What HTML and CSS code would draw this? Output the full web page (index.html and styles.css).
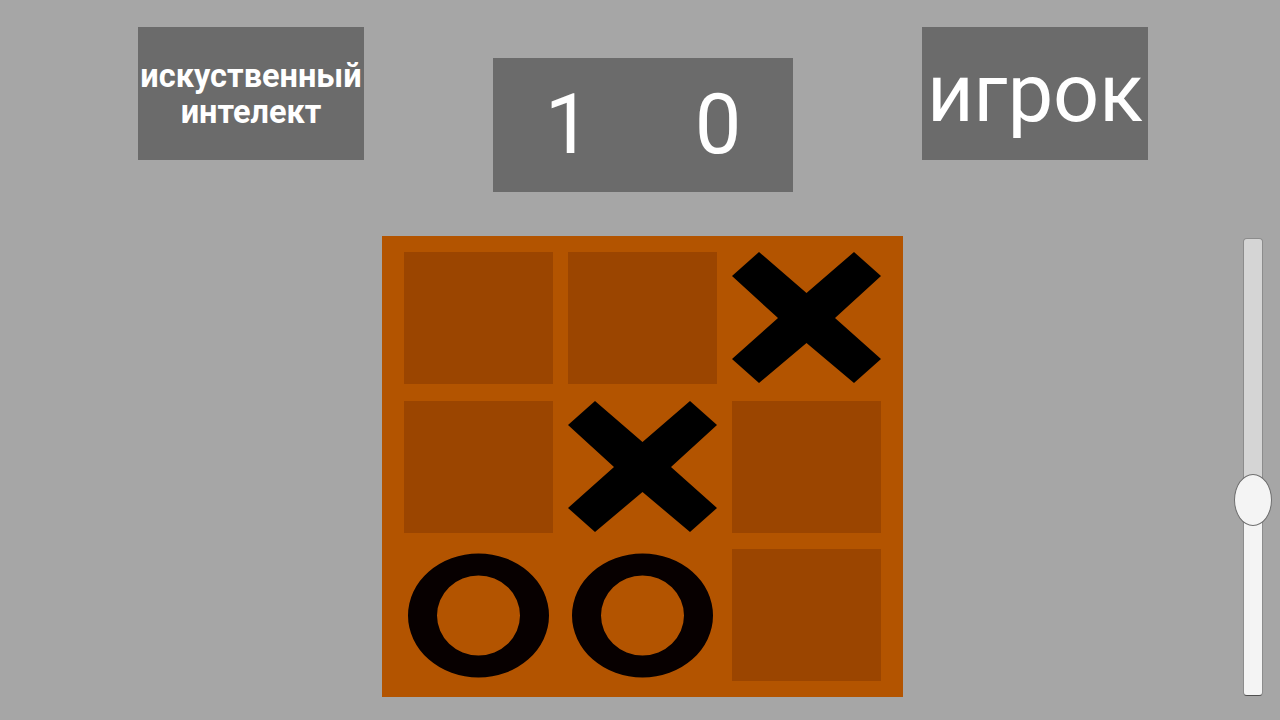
FILE: index.html
```html
<!DOCTYPE html>
<html lang="ru">
<head>
<meta charset="utf-8">
<title>Крестики-нолики</title>
<link rel="stylesheet" href="styles.css">
</head>
<body>
<div class="screen">
  <div class="top">
    <div class="btn btn-ai">искуственный<br>интелект</div>
    <div class="score">
      <div class="score-num">1</div>
      <div class="score-num">0</div>
    </div>
    <div class="btn btn-player">игрок</div>
  </div>
  <div class="main">
    <div class="board">
      <div class="cell empty"></div>
      <div class="cell empty"></div>
      <div class="cell">
        <svg class="mark" viewBox="0 0 149 132"><polygon points="27,0 0,24 46,66 0,107 27,131 74.5,91 122,131 149,107 103,66 149,24 122,0 74.5,41" fill="#000"/></svg>
      </div>
      <div class="cell empty"></div>
      <div class="cell">
        <svg class="mark" viewBox="0 0 149 132"><polygon points="27,0 0,24 46,66 0,107 27,131 74.5,91 122,131 149,107 103,66 149,24 122,0 74.5,41" fill="#000"/></svg>
      </div>
      <div class="cell empty"></div>
      <div class="cell">
        <svg class="mark" viewBox="0 0 149 132"><path fill-rule="evenodd" fill="#070000" d="M4 66.5a70.5 62 0 1 0 141 0a70.5 62 0 1 0 -141 0Z M33 66.5a41.5 40 0 1 0 83 0a41.5 40 0 1 0 -83 0Z"/></svg>
      </div>
      <div class="cell">
        <svg class="mark" viewBox="0 0 149 132"><path fill-rule="evenodd" fill="#070000" d="M4 66.5a70.5 62 0 1 0 141 0a70.5 62 0 1 0 -141 0Z M33 66.5a41.5 40 0 1 0 83 0a41.5 40 0 1 0 -83 0Z"/></svg>
      </div>
      <div class="cell empty"></div>
    </div>
    <div class="slider">
      <div class="track">
        <div class="track-upper"></div>
        <div class="track-lower"></div>
      </div>
      <div class="thumb"></div>
    </div>
  </div>
</div>
</body>
</html>
```

FILE: styles.css
```css
html, body {
  margin: 0;
  padding: 0;
}
body {
  background: #a6a6a6;
  font-family: Roboto, "Noto Sans", "DejaVu Sans", sans-serif;
}
.screen {
  width: 1280px;
  height: 720px;
  overflow: hidden;
}
.top {
  height: 236px;
  box-sizing: border-box;
  padding-top: 27px;
  padding-left: 138px;
  display: flex;
  align-items: flex-start;
  gap: 129px;
}
.btn {
  width: 226px;
  height: 133px;
  background: #6b6b6b;
  color: #fff;
  display: flex;
  align-items: center;
  justify-content: center;
  text-align: center;
}
.btn-ai {
  font-size: 32.5px;
  font-weight: 700;
  line-height: 36px;
  letter-spacing: 0;
  white-space: nowrap;
}
.btn-player {
  font-size: 81px;
  font-weight: 400;
  line-height: 1;
}
.score {
  margin-top: 31px;
  width: 300px;
  height: 134px;
  background: #6b6b6b;
  display: grid;
  grid-template-columns: 1fr 1fr;
  align-items: center;
}
.score-num {
  color: #fff;
  font-size: 83px;
  line-height: 1;
  text-align: center;
  padding-bottom: 2px;
}
.main {
  display: flex;
  align-items: flex-start;
  padding-left: 382px;
}
.board {
  background: #b35400;
  padding: 16px 22px;
  display: grid;
  grid-template-columns: repeat(3, 149px);
  grid-template-rows: repeat(3, 132px);
  column-gap: 15px;
  row-gap: 16.5px;
}
.cell {
  width: 149px;
  height: 132px;
}
.cell.empty {
  background: #9b4500;
}
.mark {
  display: block;
  width: 149px;
  height: 132px;
}
.slider {
  position: relative;
  margin-left: auto;
  margin-right: 8px;
  margin-top: 2px;
  width: 38px;
  height: 458px;
  display: flex;
  justify-content: center;
}
.track {
  width: 20px;
  height: 458px;
  box-sizing: border-box;
  border: 1px solid #8c8c8c;
  border-bottom-color: #505050;
  border-radius: 4px;
  overflow: hidden;
  display: flex;
  flex-direction: column;
}
.track-upper {
  height: 262px;
  background: #d5d5d5;
}
.track-lower {
  flex: 1;
  background: #f4f4f4;
}
.thumb {
  position: absolute;
  left: 0;
  top: 236px;
  width: 38px;
  height: 52px;
  box-sizing: border-box;
  border: 1px solid #6e6e6e;
  border-radius: 50%;
  background: #f4f4f4;
}
```
